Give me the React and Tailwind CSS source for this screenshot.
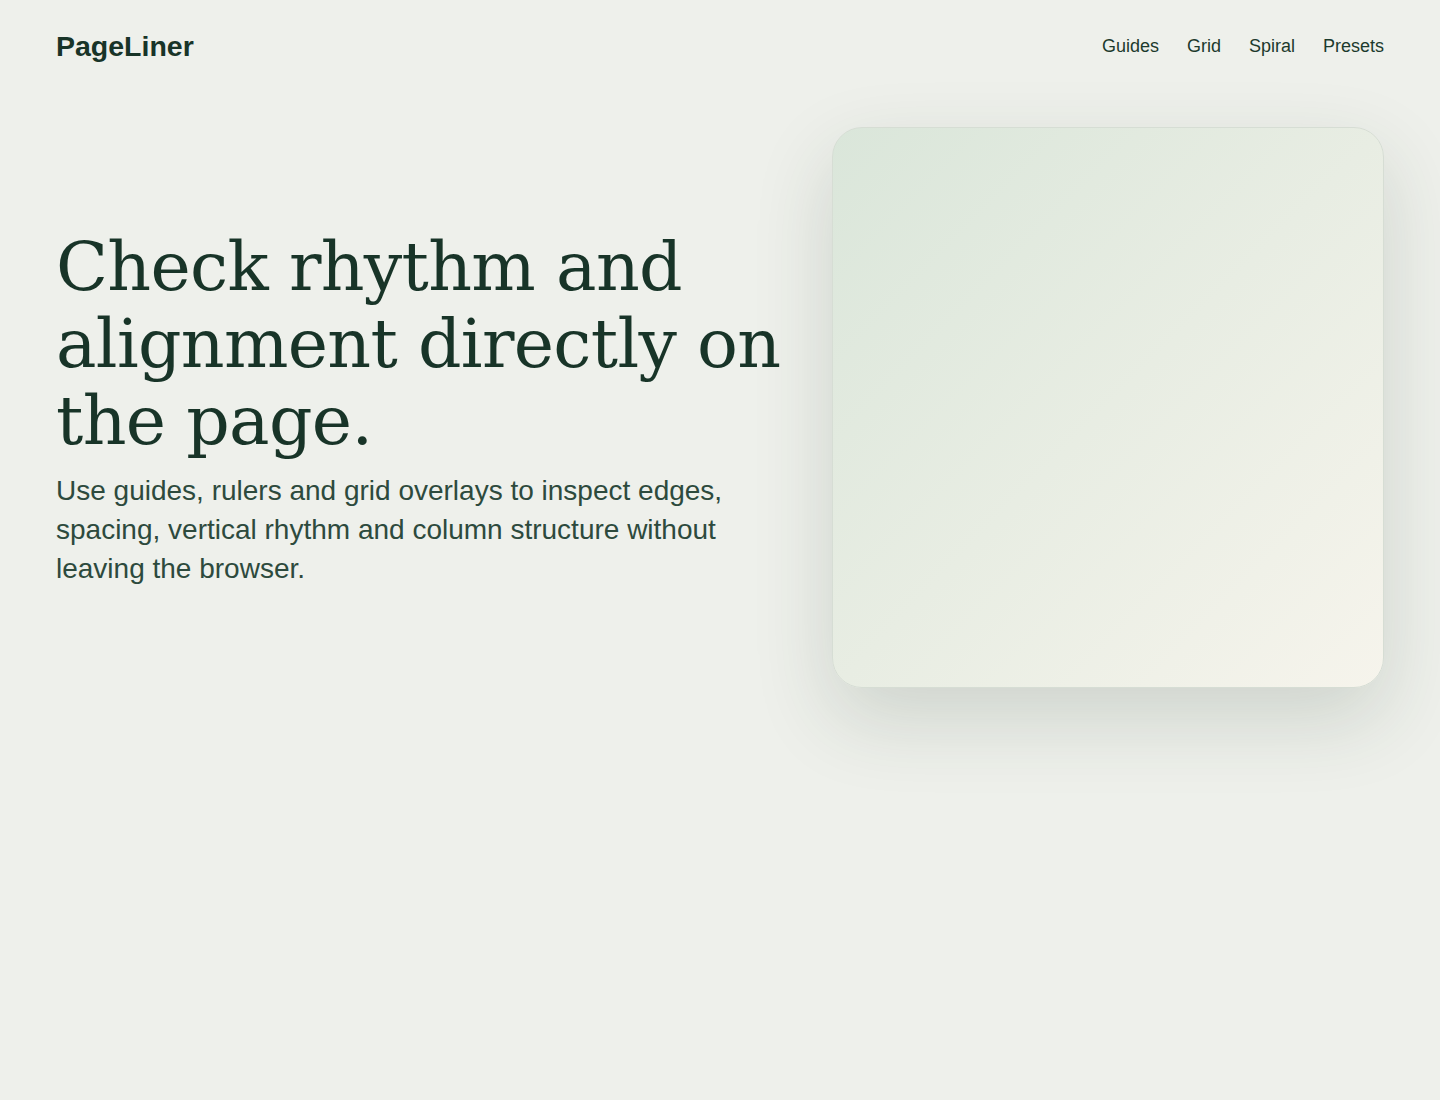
import React from 'react';

const navLinks = ['Guides', 'Grid', 'Spiral', 'Presets'];

const App = () => {
    return (
        <div className="min-h-[1100px] bg-[#eef0eb] text-[#183428] font-['Liberation_Sans',Arial,sans-serif]">
            {/* Header */}
            <header className="flex h-[92px] items-center justify-between px-14">
                <a href="#" className="text-[28.5px] font-bold leading-none text-[#183428]">
                    PageLiner
                </a>
                <nav className="flex items-center gap-7 text-[18px] text-[#1c3a2d]">
                    {navLinks.map((link) => (
                        <a key={link} href="#">
                            {link}
                        </a>
                    ))}
                </nav>
            </header>

            {/* Hero */}
            <section className="grid grid-cols-[4fr_3fr] items-center gap-10 px-14 pt-[35px]">
                <div>
                    <h1 className="font-['DejaVu_Serif',Georgia,serif] text-[68px] font-normal leading-[77px] tracking-[-0.01em] text-[#183428]">
                        Check rhythm and alignment directly on the page.
                    </h1>
                    <p className="mt-3 max-w-[700px] text-[28px] leading-[39px] text-[#2d4a3d]">
                        Use guides, rulers and grid overlays to inspect edges, spacing, vertical rhythm and column structure without leaving the browser.
                    </p>
                </div>

                <div className="h-[561px] rounded-[30px] border border-[#d6ddd4] bg-gradient-to-br from-[#dae6da] to-[#f6f4ec] shadow-[0_30px_80px_rgba(40,60,45,0.16)]" />
            </section>
        </div>
    );
};

export default App;
